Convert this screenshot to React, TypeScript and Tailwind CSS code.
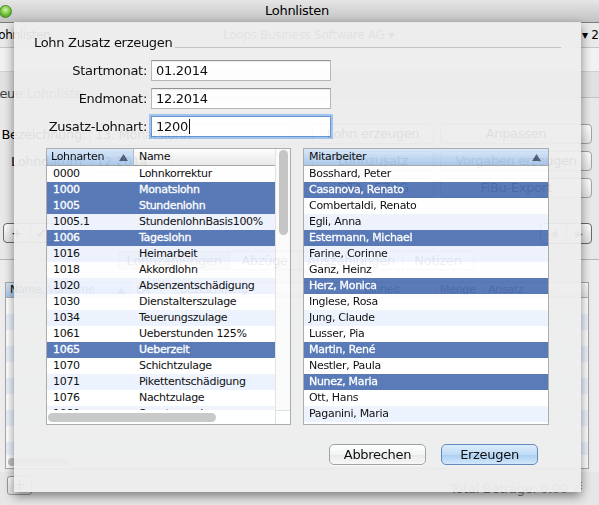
import React from 'react';

type Row = [string, string, boolean];

const lohnarten: Row[] = [
    ['0000', 'Lohnkorrektur', false],
    ['1000', 'Monatslohn', true],
    ['1005', 'Stundenlohn', true],
    ['1005.1', 'StundenlohnBasis100%', false],
    ['1006', 'Tageslohn', true],
    ['1016', 'Heimarbeit', false],
    ['1018', 'Akkordlohn', false],
    ['1020', 'Absenzentschädigung', false],
    ['1030', 'Dienstalterszulage', false],
    ['1034', 'Teuerungszulage', false],
    ['1061', 'Ueberstunden 125%', false],
    ['1065', 'Ueberzeit', true],
    ['1070', 'Schichtzulage', false],
    ['1071', 'Pikettentschädigung', false],
    ['1076', 'Nachtzulage', false],
    ['1080', 'Sonntagszulage', false],
];

const mitarbeiter: [string, boolean][] = [
    ['Bosshard, Peter', false],
    ['Casanova, Renato', true],
    ['Combertaldi, Renato', false],
    ['Egli, Anna', false],
    ['Estermann, Michael', true],
    ['Farine, Corinne', false],
    ['Ganz, Heinz', false],
    ['Herz, Monica', true],
    ['Inglese, Rosa', false],
    ['Jung, Claude', false],
    ['Lusser, Pia', false],
    ['Martin, René', true],
    ['Nestler, Paula', false],
    ['Nunez, Maria', true],
    ['Ott, Hans', false],
    ['Paganini, Maria', false],
];

const rowClass = (sel: boolean, i: number) =>
    sel
        ? 'bg-[#5073b4] text-white [-webkit-text-stroke:0.3px_#ffffff]'
        : i % 2
          ? 'bg-[#edf3fe]'
          : 'bg-white';

const SortArrow = () => (
    <svg width="9" height="7" viewBox="0 0 9 7">
        <path d="M4.5 0 L9 7 L0 7 Z" fill="#4a5c73" />
    </svg>
);

const GhostButton = ({ label }: { label: string }) => (
    <div className="h-[20px] rounded-[4px] border border-[#a3a3a3] bg-linear-to-b from-white to-[#e6e6e6] flex items-center justify-center text-[13px] tracking-[-0.3px]">
        {label}
    </div>
);

const BackgroundWindow: React.FC = () => (
    <div className="flex flex-col h-full">
        {/* title bar */}
        <div className="h-[23px] flex items-center bg-linear-to-b from-[#e6e6e6] to-[#c3c3c3] border-b border-[#7c7c7c]">
            <div className="-ml-[1px] shrink-0 w-[13px] h-[13px] rounded-full border border-[#4d8a2e] bg-[radial-gradient(circle_at_50%_35%,#d4f5a8,#6cbf38_55%,#3f8a1c)]" />
            <div className="flex-1 text-center pr-[17px] text-[13px] tracking-[-0.3px]">Lohnlisten</div>
        </div>
        <div className="h-[25px] flex items-center bg-[#e9e9e9] border-b border-[#c4c4c4] text-[12px] tracking-[-0.3px] whitespace-nowrap">
            <div className="-ml-[8px] shrink-0 w-[231px]">Lohnlisten</div>
            <div className="shrink-0 w-[359px] text-[#333]">Loops Business Software AG ▾</div>
            <div className="shrink-0">▾ 2014</div>
        </div>
        <div className="h-[24px] bg-[#f1f1f1] border-b border-[#d0d0d0]" />
        <div className="h-[26px] bg-[#e1e1e1] border-b border-[#c2c2c2]">
            <div className="-ml-[10px] pt-[15px] leading-[14px] text-[13px] tracking-[-0.3px] text-[#444]">Neue Lohnliste</div>
        </div>
        {/* form panel */}
        <div className="h-[162px] flex bg-[#e8e8e8] border-b border-[#b5b5b5]">
            <div className="w-[312px] shrink-0 flex flex-col pt-[26px] text-[13px] tracking-[-0.3px]">
                <div className="h-[22px] flex items-center gap-[4px]">
                    <div className="w-[86px] text-right">Bezeichnung:</div>
                    <div className="w-[200px] h-[22px] bg-white border border-[#b0b0b0] flex items-center pl-[4px]">13. Monatslohn</div>
                </div>
                <div className="mt-[6px] h-[20px] flex items-center gap-[6px]">
                    <div className="w-[86px] text-right">Lohndatum:</div>
                    <div className="w-[80px] h-[20px] bg-white border border-[#b0b0b0] flex items-center pl-[3px]">12.2014</div>
                </div>
                <div className="mt-[51px] ml-[3px] h-[20px] flex w-[60px] rounded-[4px] border border-[#6a6a6a] bg-linear-to-b from-white to-[#e2e2e2] text-[14px]">
                    <div className="w-[27px] flex items-center justify-center border-r border-[#a0a0a0]">+</div>
                    <div className="w-[22px] flex items-center justify-center border-r border-[#a0a0a0]">✓</div>
                    <div className="flex-1" />
                </div>
            </div>
            <div className="w-[280px] shrink-0 flex flex-col pt-[26px]">
                <div className="grid grid-cols-[122px_152px] gap-x-[6px] gap-y-[7px]">
                    <GhostButton label="Lohn erzeugen" />
                    <GhostButton label="Anpassen" />
                    <GhostButton label="Lohnzusatz" />
                    <GhostButton label="Vorgaben erzeugen" />
                    <GhostButton label="DTA / EZAG" />
                    <GhostButton label="FiBu-Export" />
                </div>
                <div className="mt-[25px] self-end w-[52px] h-[21px] flex rounded-[4px] border border-[#6a6a6a] bg-linear-to-b from-white to-[#e0e0e0] text-[10px] text-[#777]">
                    <div className="flex-1 flex items-center justify-center border-r border-[#a0a0a0]">◀</div>
                    <div className="flex-1 flex items-center justify-center">▶</div>
                </div>
            </div>
        </div>
        {/* tab area */}
        <div className="h-[212px] bg-[#ececec] flex flex-col">
            <div className="-mt-[9px] ml-[118px] h-[19px] flex text-[13px] tracking-[-0.3px]">
                <div className="w-[112px] rounded-l-[4px] border border-[#8e8e8e] bg-linear-to-b from-[#d0d0d0] to-[#bcbcbc] flex items-center justify-center">Lohnzahlungen</div>
                <div className="w-[70px] border-y border-r border-[#a0a0a0] bg-white flex items-center justify-center">Abzüge</div>
                <div className="w-[103px] border-y border-r border-[#a0a0a0] bg-white flex items-center justify-center">Auszahlungen</div>
                <div className="w-[71px] rounded-r-[4px] border-y border-r border-[#a0a0a0] bg-white flex items-center justify-center">Notizen</div>
            </div>
            <div className="mt-[12px] ml-[5px] w-[584px] h-[187px] border border-[#a8a8a8] bg-white flex flex-col">
                <div className="h-[15px] flex border-b border-[#b0b0b0] bg-linear-to-b from-white to-[#e8e8e8] text-[11px] tracking-[-0.3px] leading-[14px]">
                    <div className="w-[126px] flex items-center justify-between pl-[4px] pr-[5px] border-r border-[#c8c8c8] bg-linear-to-b from-[#d8e7f8] to-[#a7c6ea]">
                        <span>Name, Vorname</span>
                        <SortArrow />
                    </div>
                    <div className="w-[44px] pl-[4px] border-r border-[#c8c8c8]">LA</div>
                    <div className="w-[184px] pl-[4px] border-r border-[#c8c8c8]">Bezeichnung</div>
                    <div className="w-[76px] pl-[4px] border-r border-[#c8c8c8]">Einheit</div>
                    <div className="w-[48px] pl-[4px] border-r border-[#c8c8c8]">Menge</div>
                    <div className="w-[71px] pl-[4px] border-r border-[#c8c8c8]">Ansatz</div>
                    <div className="flex-1" />
                </div>
                <div className="flex-1 overflow-hidden">
                    {Array.from({ length: 10 }).map((_, i) => (
                        <div key={i} className={`h-[16px] ${i % 2 ? 'bg-[#edf3fe]' : 'bg-white'}`} />
                    ))}
                </div>
                <div className="h-[13px] flex items-center pl-[2px]">
                    <div className="w-[60px] h-[8px] rounded-full bg-[#c4c4c4]" />
                </div>
            </div>
        </div>
        {/* bottom bar */}
        <div className="h-[33px] flex items-center bg-[#e6e6e6]">
            <div className="ml-[7px] mt-[-6px] w-[25px] h-[19px] rounded-[3px] border border-[#9a9a9a] bg-linear-to-b from-white to-[#e4e4e4] flex items-center justify-center text-[15px] text-[#666]">+</div>
            <div className="ml-auto mr-[4px] text-[13px] tracking-[-0.3px] text-[#777]">Total Beträge: 0.00</div>
            <svg width="11" height="11" viewBox="0 0 11 11" className="mr-[16px] mt-[-4px]">
                <path d="M1 10 L10 1 M4 10 L10 4 M7 10 L10 7" stroke="#8a8a8a" strokeWidth="1" />
            </svg>
        </div>
    </div>
);

const Field = ({ value, focused }: { value: string; focused?: boolean }) => (
    <div
        className={`w-[180px] h-[21px] bg-white flex items-center pl-[4px] text-[13px] tracking-[-0.3px] border ${
            focused
                ? 'border-[#5f8fcf] shadow-[0_0_0_2px_#9cc0ec]'
                : 'border-[#b4b4b4] border-t-[#8e8e8e] shadow-[inset_0_1px_1px_rgba(0,0,0,0.08)]'
        }`}
    >
        {value}
        {focused && <span className="ml-[1px] inline-block w-[1px] h-[15px] bg-black" />}
    </div>
);

const Sheet: React.FC = () => (
    <div className="absolute left-[14px] top-[22px] w-[567px] h-[470px] bg-[#ededed] opacity-[0.94] shadow-[0_4px_10px_rgba(0,0,0,0.5)] flex flex-col px-[20px]">
        <div className="mt-[13px] h-[16px] flex">
            <div className="text-[13px] tracking-[-0.3px] leading-[16px] pr-[3px]">Lohn Zusatz erzeugen</div>
            <div className="flex-1 self-end mb-[3px] border-t border-[#c4c4c4]" />
        </div>

        <div className="mt-[9px] flex flex-col gap-[7px]">
            {[
                ['Startmonat:', '01.2014', false],
                ['Endmonat:', '12.2014', false],
                ['Zusatz-Lohnart:', '1200', true],
            ].map(([label, value, focused]) => (
                <div key={label as string} className="h-[21px] flex items-center gap-[4px]">
                    <div className="w-[113px] text-right text-[13px] tracking-[-0.3px]">{label}</div>
                    <Field value={value as string} focused={focused as boolean} />
                </div>
            ))}
        </div>

        <div className="mt-[11px] ml-[12px] flex gap-[12px]">
            {/* Lohnarten table */}
            <div className="w-[245px] h-[277px] border border-[#a8a8a8] bg-white flex flex-col">
                <div className="flex h-[261px]">
                    <div className="w-[228px] flex flex-col">
                        <div className="h-[17px] flex border-b border-[#a3a3a3] text-[11px] tracking-[-0.3px]">
                            <div className="w-[87px] flex items-center justify-between pl-[4px] pr-[5px] border-r border-[#a9b8ca] bg-linear-to-b from-[#d8e7f8] to-[#a7c6ea]">
                                <span>Lohnarten</span>
                                <SortArrow />
                            </div>
                            <div className="flex-1 flex items-center pl-[5px] bg-linear-to-b from-white to-[#e9e9e9]">Name</div>
                        </div>
                        <div className="h-[244px] overflow-hidden">
                            {lohnarten.map(([nr, name, sel], i) => (
                                <div key={nr} className={`h-[16px] flex items-center text-[11px] tracking-[-0.3px] leading-[16px] ${rowClass(sel, i)}`}>
                                    <div className="w-[87px] pl-[6px]">{nr}</div>
                                    <div className="pl-[5px] whitespace-nowrap">{name}</div>
                                </div>
                            ))}
                        </div>
                    </div>
                    <div className="w-[15px] border-l border-[#e2e2e2] bg-[#fbfbfb] pt-[1px]">
                        <div className="mx-auto w-[9px] h-[85px] rounded-full bg-[#c3c3c3]" />
                    </div>
                </div>
                <div className="h-[14px] flex">
                    <div className="w-[228px] flex items-center pl-[1px]">
                        <div className="w-[168px] h-[9px] rounded-full bg-[#c6c6c6]" />
                    </div>
                    <div className="w-[15px] border-l border-t border-[#dcdcdc]" />
                </div>
            </div>

            {/* Mitarbeiter table */}
            <div className="w-[246px] h-[277px] border border-[#a8a8a8] bg-white flex flex-col">
                <div className="h-[17px] flex items-center justify-between pl-[5px] pr-[7px] border-b border-[#a3a3a3] bg-linear-to-b from-[#d8e7f8] to-[#a7c6ea] text-[11px] tracking-[-0.3px]">
                    <span>Mitarbeiter</span>
                    <SortArrow />
                </div>
                {mitarbeiter.map(([name, sel], i) => (
                    <div key={name} className={`h-[16px] flex items-center pl-[5px] text-[11px] tracking-[-0.3px] leading-[16px] ${rowClass(sel, i)}`}>
                        {name}
                    </div>
                ))}
            </div>
        </div>

        <div className="mt-[19px] mr-[23px] flex justify-end gap-[15px]">
            <button
                type="button"
                className="w-[97px] h-[21px] rounded-[5px] border border-[#9c9c9c] bg-[linear-gradient(to_bottom,#ffffff_0%,#f4f4f4_50%,#e8e8e8_51%,#f7f7f7_100%)] text-[13px] tracking-[-0.3px] leading-[19px] shadow-[0_1px_0_rgba(255,255,255,0.6)]"
            >
                Abbrechen
            </button>
            <button
                type="button"
                className="w-[97px] h-[21px] rounded-[5px] border border-[#5b82b8] bg-[linear-gradient(to_bottom,#dcebfb_0%,#bcd9f6_50%,#a5caf1_51%,#d0e6fb_100%)] text-[13px] tracking-[-0.3px] leading-[19px]"
            >
                Erzeugen
            </button>
        </div>
    </div>
);

const App: React.FC = () => {
    return (
        <div className="relative w-[599px] h-[505px] overflow-hidden bg-[#e6e6e6] text-black font-['DejaVu_Sans',sans-serif]">
            <BackgroundWindow />
            <Sheet />
        </div>
    );
};

export default App;
